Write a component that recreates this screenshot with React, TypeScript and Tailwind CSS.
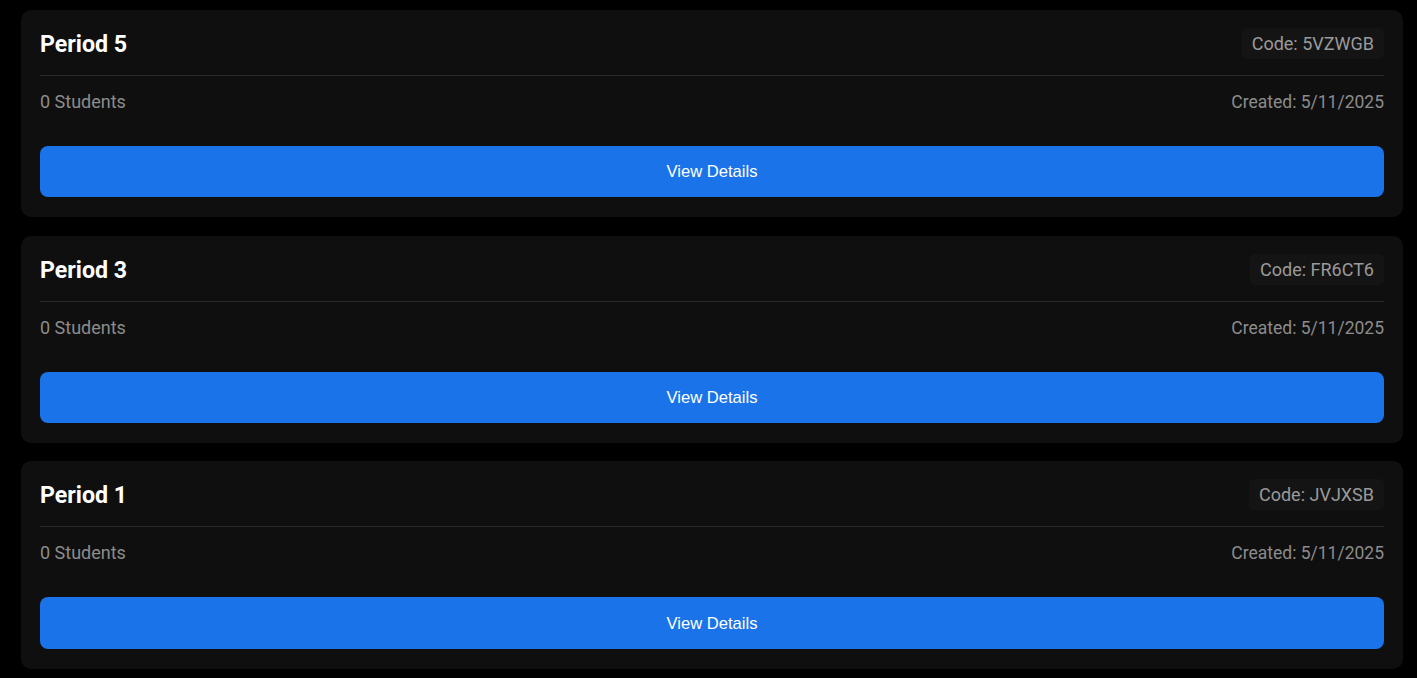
import React from "react";

const classes = [
  { name: "Period 5", code: "5VZWGB" },
  { name: "Period 3", code: "FR6CT6" },
  { name: "Period 1", code: "JVJXSB" },
];

export default function App() {
  return (
    <div
      className="min-h-[678px] w-full bg-black pt-[10px] pl-[21px]"
      style={{ fontFamily: "Roboto, 'Noto Sans', sans-serif" }}
    >
      <div className="flex w-[1382px] flex-col gap-[18.4px]">
        {classes.map((c) => (
          <div
            key={c.code}
            className="flex h-[207.3px] flex-col rounded-[10px] bg-[#0f0f0f] px-[19px] pt-[18px] pb-[20px]"
          >
            <div className="flex items-center justify-between border-b border-[#2a2a2a] pb-[16px]">
              <h2 className="pt-[2px] text-[23.2px] font-bold leading-[29px] text-white">{c.name}</h2>
              <span className="h-[31px] rounded-[5px] bg-[#141414] px-[10px] text-[18px] leading-[31px] text-[#9a9a9a]">
                Code: {c.code}
              </span>
            </div>
            <div className="mt-[12px] flex items-center justify-between text-[18px] leading-[28px] text-[#8c8c8c]">
              <span>0 Students</span>
              <span className="text-[17.5px]">Created: 5/11/2025</span>
            </div>
            <button
              className="mt-[30px] h-[51.5px] w-full rounded-[8px] bg-[#1a73e8] pt-[2px] text-[16.6px] text-white"
              style={{ fontFamily: "'Liberation Sans', Arial, sans-serif" }}
            >
              View Details
            </button>
          </div>
        ))}
      </div>
    </div>
  );
}
